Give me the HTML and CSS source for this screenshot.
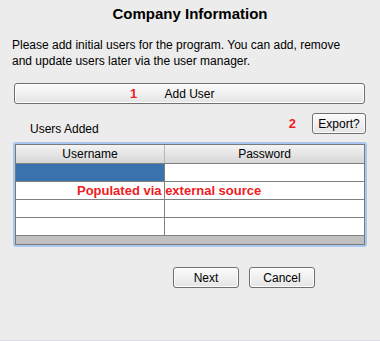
FILE: index.html
```html
<!DOCTYPE html>
<html lang="en">
<head>
    <meta charset="UTF-8">
    <title>Company Information</title>
    <link rel="stylesheet" href="styles.css">
</head>
<body>
    <div class="wizard">
        <h1 class="wizard-title">Company Information</h1>
        <p class="intro">Please add initial users for the program. You can add, remove and update users later via the user manager.</p>

        <button class="btn btn-wide">
            <span class="marker marker-one">1</span>
            Add User
        </button>

        <div class="users-bar">
            <span class="users-label">Users Added</span>
            <span class="marker">2</span>
            <button class="btn btn-export">Export?</button>
        </div>

        <div class="grid-frame">
            <div class="grid">
                <div class="grid-head">
                    <div class="head-cell">Username</div>
                    <div class="head-cell">Password</div>
                </div>
                <div class="grid-row">
                    <div class="cell cell-selected"></div>
                    <div class="cell"></div>
                </div>
                <div class="grid-row">
                    <div class="cell"></div>
                    <div class="cell"></div>
                </div>
                <div class="grid-row">
                    <div class="cell"></div>
                    <div class="cell"></div>
                </div>
                <div class="grid-row">
                    <div class="cell"></div>
                    <div class="cell"></div>
                </div>
                <div class="grid-scroll"></div>
                <!-- annotation drawn over the rows -->
                <div class="grid-note">Populated via external source</div>
            </div>
        </div>

        <div class="actions">
            <button class="btn btn-small">Next</button>
            <button class="btn btn-small">Cancel</button>
        </div>
    </div>
</body>
</html>
```

FILE: styles.css
```css
:root {
    --bg-color: #ececec;
    --text-color: #000000;
    --note-color: #ee1c24;
    --line-color: #808080;
    --select-color: #3a72ad;
}

* {
    margin: 0;
    padding: 0;
    box-sizing: border-box;
}

body {
    background-color: var(--bg-color);
    color: var(--text-color);
    font-family: 'Liberation Sans', Arial, sans-serif;
    font-size: 12px;
    height: 341px;
    border-bottom: 1px solid #dcdce6;
}

.wizard {
    padding: 5px 14px 0 14px;
}

.wizard-title {
    font-size: 15px;
    font-weight: bold;
    text-align: center;
    line-height: 18px;
}

.intro {
    margin: 14px 0 0 -2px;
    line-height: 16px;
    padding-right: 20px;
}

.btn {
    font-family: inherit;
    font-size: 12px;
    color: #000;
    border: 1px solid #707070;
    border-radius: 3px;
    background: linear-gradient(#fbfbfb, #f0f0f0 50%, #e4e4e4);
    box-shadow: inset 0 0 0 1px #fcfcfc;
    height: 21px;
    cursor: pointer;
}

.btn-wide {
    position: relative;
    display: block;
    width: 351px;
    margin-top: 14px;
}

.marker {
    color: var(--note-color);
    font-weight: bold;
    font-size: 13px;
}

.marker-one {
    position: absolute;
    left: 115px;
    top: 2px;
}

.users-bar {
    display: flex;
    align-items: center;
    height: 30px;
    padding-top: 9px;
}

.users-label {
    margin-left: 16px;
    margin-top: 11px;
    flex: 1;
}

.users-bar .marker {
    margin-right: 16px;
}

.btn-export {
    width: 54px;
}

.grid-frame {
    margin: 8px 0 0 -1px;
    width: 354px;
    border: 2px solid #a9c7ee;
    border-radius: 3px;
}

.grid {
    position: relative;
    border: 1px solid #7a7a7a;
    background: #ffffff;
}

.grid-head,
.grid-row {
    display: grid;
    grid-template-columns: 149px 1fr;
}

.grid-head {
    height: 19px;
    background: linear-gradient(#f4f4f4, #d6d6d6);
    border-bottom: 1px solid var(--line-color);
}

.head-cell {
    text-align: center;
    line-height: 18px;
}

.head-cell:first-child {
    border-right: 1px solid #b8b8b8;
}

.grid-row {
    height: 18px;
    border-bottom: 1px solid var(--line-color);
}

.cell:first-child {
    border-right: 1px solid var(--line-color);
}

.cell-selected {
    background-color: var(--select-color);
}

.grid-scroll {
    height: 8px;
    background: #c0c0c0;
}

.grid-note {
    position: absolute;
    left: 61px;
    top: 38px;
    color: var(--note-color);
    font-weight: bold;
    font-size: 13px;
    line-height: 16px;
}

.actions {
    display: flex;
    gap: 10px;
    margin: 20px 0 0 159px;
}

.btn-small {
    width: 66px;
    height: 21px;
}
```
